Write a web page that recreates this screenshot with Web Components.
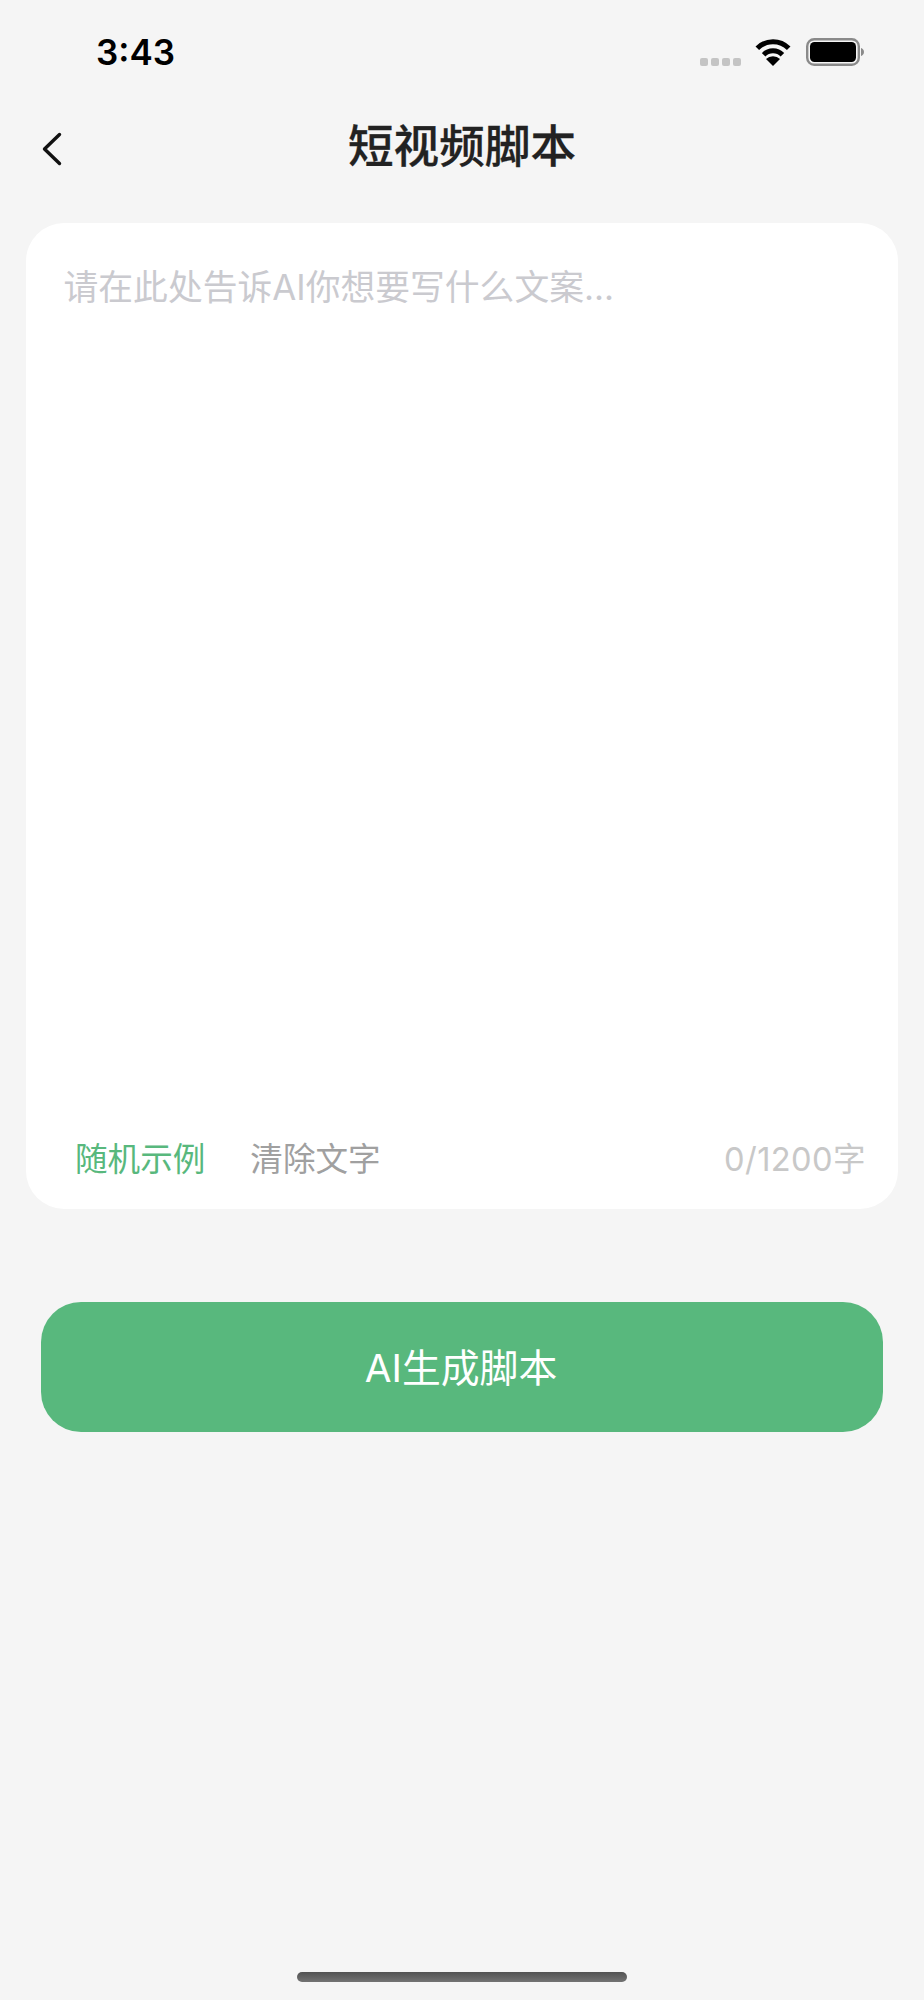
<!DOCTYPE html>
<html lang="zh">
<head>
<meta charset="utf-8">
<title>短视频脚本</title>
<style>
  html, body {
    margin: 0;
    background: #f5f5f5;
    font-family: Inter, "Noto Sans CJK SC", sans-serif;
  }
</style>
</head>
<body>
<script-page>
  <status-bar time="3:43"></status-bar>
  <nav-bar>短视频脚本</nav-bar>
  <prompt-card placeholder="请在此处告诉AI你想要写什么文案..." count="0/1200字"></prompt-card>
  <primary-button>AI生成脚本</primary-button>
</script-page>

<script>
class ScriptPage extends HTMLElement {
  connectedCallback() {
    this.attachShadow({ mode: 'open' });
    this.shadowRoot.innerHTML = `
      <style>
        :host {
          display: flex;
          flex-direction: column;
          height: 2000px;
          box-sizing: border-box;
        }
        .home {
          margin: auto auto 18px;
          width: 330px;
          height: 10px;
          border-radius: 5px;
          background: linear-gradient(180deg, #525252, #737373);
        }
      </style>
      <slot></slot>
      <div class="home"></div>
    `;
  }
}

class StatusBar extends HTMLElement {
  connectedCallback() {
    this.attachShadow({ mode: 'open' });
    this.shadowRoot.innerHTML = `
      <style>
        :host {
          display: flex;
          align-items: flex-start;
          height: 80px;
          padding: 0 60px 0 96px;
        }
        .time {
          margin-top: 30px;
          font-size: 35px;
          line-height: 44px;
          font-weight: 600;
          color: #000;
        }
        .icons {
          margin-left: auto;
          display: flex;
          align-items: flex-start;
        }
        .dots {
          display: flex;
          gap: 3px;
          margin: 58px 14px 0 0;
        }
        .dots i {
          width: 8px;
          height: 8px;
          border-radius: 2px;
          background: #c4c4c4;
        }
        svg { display: block; }
        .wifi { margin: 39px 15px 0 0; }
        .battery { margin-top: 38px; }
      </style>
      <div class="time"></div>
      <div class="icons">
        <div class="dots"><i></i><i></i><i></i><i></i></div>
        <svg class="wifi" width="36" height="27" viewBox="0 0 36 27">
          <path d="M2.3 9.3a22 22 0 0 1 31.4 0" fill="none" stroke="#000" stroke-width="5"/>
          <path d="M8.6 15.8a13 13 0 0 1 18.8 0" fill="none" stroke="#000" stroke-width="5"/>
          <path d="M18 27l-7-7a10 10 0 0 1 14 0z" fill="#000"/>
        </svg>
        <svg class="battery" width="58" height="28" viewBox="0 0 58 28">
          <rect x="1.200" y="1.200" width="51.600" height="25.600" rx="7" fill="none" stroke="#8a8a8a" stroke-width="2.400"/>
          <rect x="4" y="4" width="46" height="20" rx="4.500" fill="#000"/>
          <path d="M55 10c1.600.4 3 2 3 4s-1.400 3.600-3 4z" fill="#8a8a8a"/>
        </svg>
      </div>
    `;
    this.shadowRoot.querySelector('.time').textContent = this.getAttribute('time');
  }
}

class NavBar extends HTMLElement {
  connectedCallback() {
    this.attachShadow({ mode: 'open' });
    this.shadowRoot.innerHTML = `
      <style>
        :host {
          display: block;
          position: relative;
          height: 143px;
          text-align: center;
          font-size: 45.6px;
          line-height: 66px;
          font-weight: 500;
          -webkit-text-stroke: 0.3px #222;
          color: #222;
        }
        .title { padding-top: 34px; }
        svg {
          position: absolute;
          left: 41px;
          top: 51px;
        }
      </style>
      <svg width="22" height="36" viewBox="0 0 22 36">
        <path d="M18.500 3.500L3.500 18l15 14.500" fill="none" stroke="#111" stroke-width="3.400" stroke-linecap="round" stroke-linejoin="round"/>
      </svg>
      <div class="title"><slot></slot></div>
    `;
  }
}

class PromptCard extends HTMLElement {
  connectedCallback() {
    this.attachShadow({ mode: 'open' });
    this.shadowRoot.innerHTML = `
      <style>
        :host {
          display: flex;
          flex-direction: column;
          box-sizing: border-box;
          height: 986px;
          margin: 0 26px;
          padding: 36.500px 32px 27px 38px;
          background: #fff;
          border-radius: 38px;
        }
        .placeholder {
          margin-left: -0.5px;
          font-size: 34.800px;
          line-height: 54px;
          color: #cacacf;
        }
        .tools {
          margin-top: auto;
          display: flex;
          align-items: center;
          font-size: 32.600px;
          line-height: 46px;
        }
        .random { color: #58b87d; margin-left: 11px; }
        .clear { color: #a0a0a0; margin-left: 45px; }
        .count { color: #c8c8c8; margin-left: auto; letter-spacing: 0.4px; }
      </style>
      <div class="placeholder"></div>
      <div class="tools">
        <span class="random">随机示例</span>
        <span class="clear">清除文字</span>
        <span class="count"></span>
      </div>
    `;
    this.shadowRoot.querySelector('.placeholder').textContent = this.getAttribute('placeholder');
    this.shadowRoot.querySelector('.count').textContent = this.getAttribute('count');
  }
}

class PrimaryButton extends HTMLElement {
  connectedCallback() {
    this.attachShadow({ mode: 'open' });
    this.shadowRoot.innerHTML = `
      <style>
        :host {
          display: flex;
          align-items: center;
          justify-content: center;
          box-sizing: border-box;
          height: 130px;
          padding: 0 2px 5px 0;
          margin: 93px 41px 0;
          border-radius: 40px;
          background: #58b87d;
          color: #fff;
          font-size: 38.800px;
        }
      </style>
      <slot></slot>
    `;
  }
}

customElements.define('script-page', ScriptPage);
customElements.define('status-bar', StatusBar);
customElements.define('nav-bar', NavBar);
customElements.define('prompt-card', PromptCard);
customElements.define('primary-button', PrimaryButton);
</script>
</body>
</html>
